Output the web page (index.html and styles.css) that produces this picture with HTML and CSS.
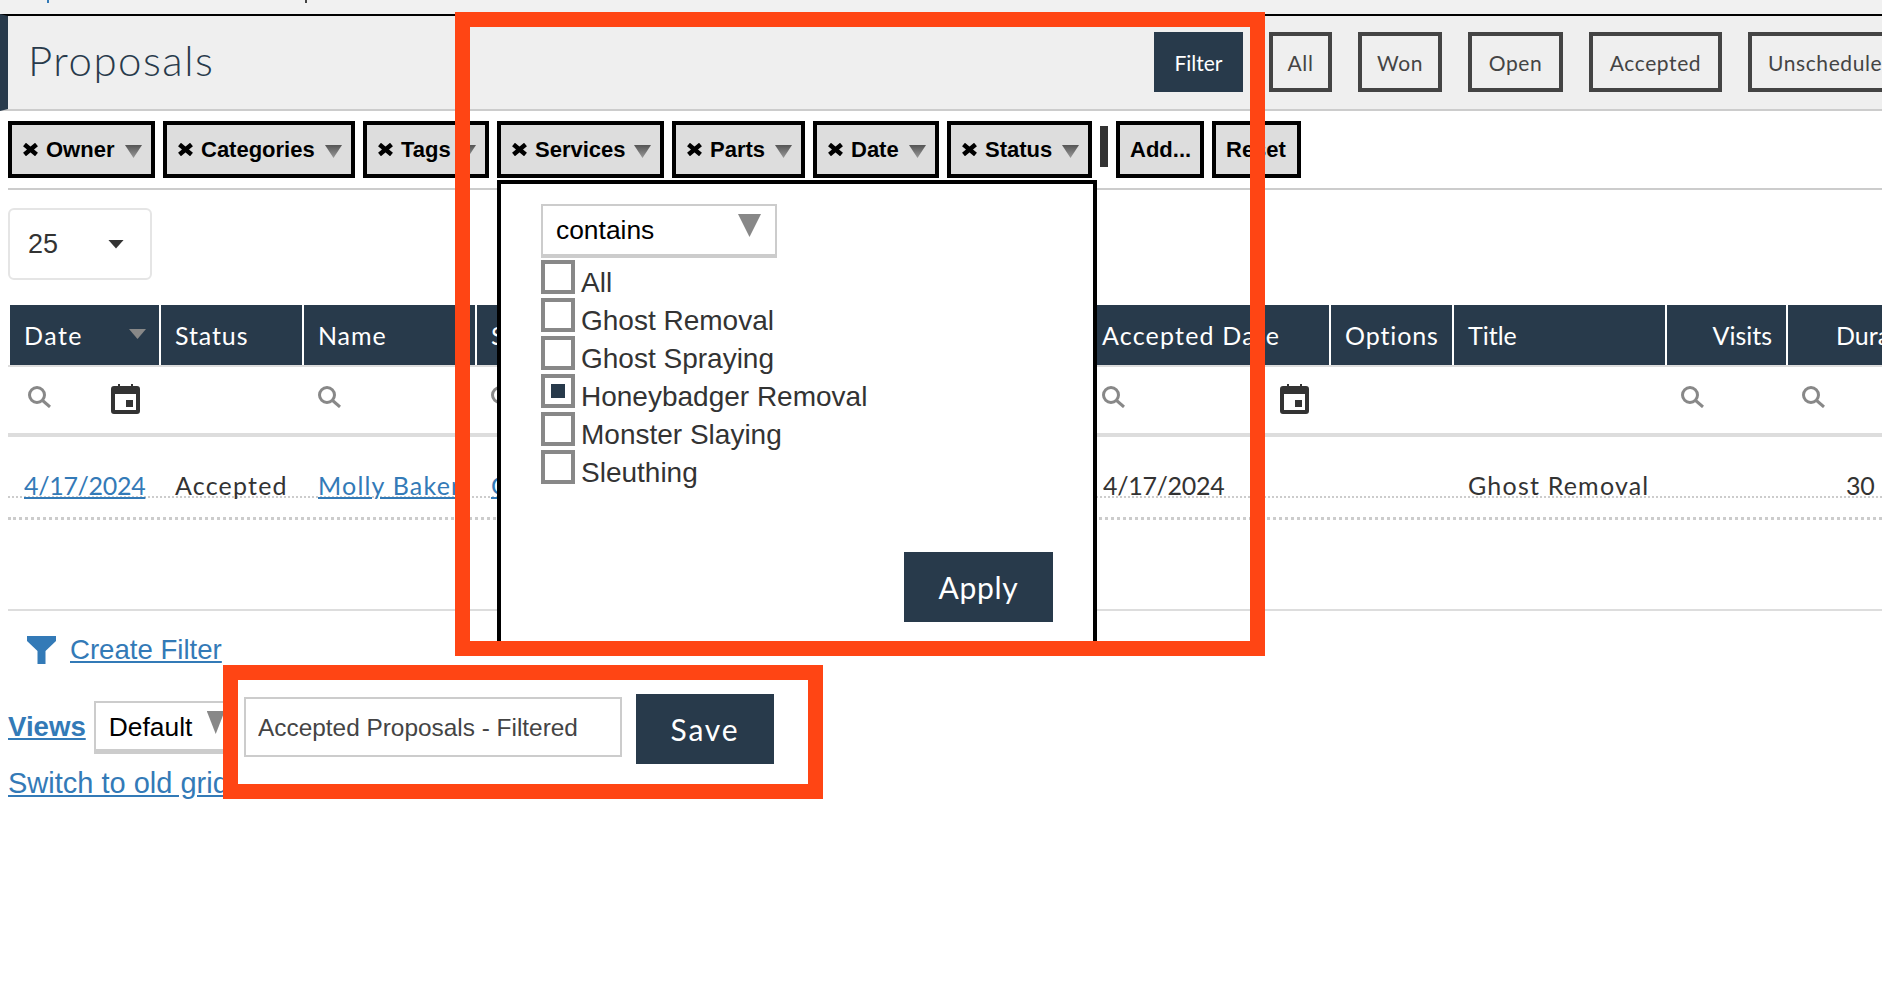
FILE: index.html
```html
<!DOCTYPE html>
<html lang="en">
<head>
<meta charset="utf-8">
<title>Proposals</title>
<link rel="stylesheet" href="styles.css">
</head>
<body>
<div class="page">
  <div class="top-strip"><span class="speck speck-blue"></span><span class="speck speck-dark"></span></div>
  <header class="page-header">
    <h1 class="title">Proposals</h1>
    <button class="btn-filter">Filter</button>
    <nav class="tabs">
      <a class="tab tab-all">All</a>
      <a class="tab tab-won">Won</a>
      <a class="tab tab-open">Open</a>
      <a class="tab tab-accepted">Accepted</a>
      <a class="tab tab-unscheduled">Unscheduled</a>
    </nav>
  </header>

  <div class="chips">
    <div class="chip chip-owner"><svg class="x" viewBox="0 0 15 13"><path d="M1.500 1.500 13.500 11.500M13.500 1.500 1.500 11.500"/></svg>Owner<i class="tri"></i></div>
    <div class="chip chip-categories"><svg class="x" viewBox="0 0 15 13"><path d="M1.500 1.500 13.500 11.500M13.500 1.500 1.500 11.500"/></svg>Categories<i class="tri"></i></div>
    <div class="chip chip-tags"><svg class="x" viewBox="0 0 15 13"><path d="M1.500 1.500 13.500 11.500M13.500 1.500 1.500 11.500"/></svg>Tags<i class="tri"></i></div>
    <div class="chip chip-services"><svg class="x" viewBox="0 0 15 13"><path d="M1.500 1.500 13.500 11.500M13.500 1.500 1.500 11.500"/></svg>Services<i class="tri"></i></div>
    <div class="chip chip-parts"><svg class="x" viewBox="0 0 15 13"><path d="M1.500 1.500 13.500 11.500M13.500 1.500 1.500 11.500"/></svg>Parts<i class="tri"></i></div>
    <div class="chip chip-date"><svg class="x" viewBox="0 0 15 13"><path d="M1.500 1.500 13.500 11.500M13.500 1.500 1.500 11.500"/></svg>Date<i class="tri"></i></div>
    <div class="chip chip-status"><svg class="x" viewBox="0 0 15 13"><path d="M1.500 1.500 13.500 11.500M13.500 1.500 1.500 11.500"/></svg>Status<i class="tri"></i></div>
    <span class="chip-sep"></span>
    <div class="chip chip-add">Add...</div>
    <div class="chip chip-reset">Reset</div>
  </div>

  <div class="page-size"><span>25</span><i class="caret"></i></div>

  <section class="grid">
    <div class="row row-head">
      <div class="cell cell-date-head">Date<i class="sort"></i></div>
      <div class="cell">Status</div>
      <div class="cell">Name</div>
      <div class="cell">Service</div>
      <div class="cell cell-accepted-head">Accepted Date</div>
      <div class="cell">Options</div>
      <div class="cell cell-title">Title</div>
      <div class="cell cell-right">Visits</div>
      <div class="cell cell-right cell-dur">Duration</div>
    </div>
    <div class="row row-filter">
      <div class="cell cell-first-filter">
        <svg class="search" viewBox="0 0 23 22"><circle cx="9" cy="9" r="7.500"/><path d="M14 14 22 21"/></svg>
        <svg class="cal" viewBox="0 0 29 30"><path class="cal-body" d="M3 2H7V0H9V2H20V0H22V2H26Q29 2 29 5V27Q29 30 26 30H3Q0 30 0 27V5Q0 2 3 2Z"/><rect class="cal-face" x="4" y="10" width="21" height="16"/><rect class="cal-body" x="15" y="16" width="7" height="7"/></svg>
      </div>
      <div class="cell"></div>
      <div class="cell"><svg class="search" viewBox="0 0 23 22"><circle cx="9" cy="9" r="7.500"/><path d="M14 14 22 21"/></svg></div>
      <div class="cell"><svg class="search" viewBox="0 0 23 22"><circle cx="9" cy="9" r="7.500"/><path d="M14 14 22 21"/></svg></div>
      <div class="cell cell-accepted-filter">
        <svg class="search" viewBox="0 0 23 22"><circle cx="9" cy="9" r="7.500"/><path d="M14 14 22 21"/></svg>
        <svg class="cal" viewBox="0 0 29 30"><path class="cal-body" d="M3 2H7V0H9V2H20V0H22V2H26Q29 2 29 5V27Q29 30 26 30H3Q0 30 0 27V5Q0 2 3 2Z"/><rect class="cal-face" x="4" y="10" width="21" height="16"/><rect class="cal-body" x="15" y="16" width="7" height="7"/></svg>
      </div>
      <div class="cell"></div>
      <div class="cell"></div>
      <div class="cell"><svg class="search" viewBox="0 0 23 22"><circle cx="9" cy="9" r="7.500"/><path d="M14 14 22 21"/></svg></div>
      <div class="cell"><svg class="search" viewBox="0 0 23 22"><circle cx="9" cy="9" r="7.500"/><path d="M14 14 22 21"/></svg></div>
    </div>
    <div class="row row-data">
      <div class="cell"><a class="link num">4/17/2024</a></div>
      <div class="cell">Accepted</div>
      <div class="cell"><a class="link">Molly Baker</a></div>
      <div class="cell"><a class="link">Ghost Removal</a></div>
      <div class="cell cell-accepted-date"><span class="num">4/17/2024</span></div>
      <div class="cell"></div>
      <div class="cell">Ghost Removal</div>
      <div class="cell"></div>
      <div class="cell cell-thirty"><span class="num">30</span></div>
    </div>
    <div class="row-end"></div>
  </section>

  <footer class="foot">
    <div class="foot-filter">
      <svg class="funnel" viewBox="0 0 29 28"><path d="M0 0H29V5L18.500 15V28H10.500V15L0 5Z"/></svg>
      <a class="foot-link">Create Filter</a>
    </div>
    <div class="foot-views">
      <a class="foot-link foot-bold">Views</a>
      <div class="view-select">Default<i class="flat-tri"></i></div>
    </div>
    <a class="foot-link foot-switch">Switch to old grid</a>
  </footer>

  <div class="popup">
    <div class="pop-select">contains<i class="flat-tri flat-tri-lg"></i></div>
    <ul class="options">
      <li class="option"><span class="box"></span>All</li>
      <li class="option"><span class="box"></span>Ghost Removal</li>
      <li class="option"><span class="box"></span>Ghost Spraying</li>
      <li class="option"><span class="box box-on"></span>Honeybadger Removal</li>
      <li class="option"><span class="box"></span>Monster Slaying</li>
      <li class="option"><span class="box"></span>Sleuthing</li>
    </ul>
    <button class="btn-apply">Apply</button>
  </div>

  <div class="mark mark-filter"></div>
  <div class="mark mark-save">
    <input class="save-input" type="text" value="Accepted Proposals - Filtered">
    <button class="btn-save">Save</button>
  </div>
</div>
</body>
</html>
```

FILE: styles.css
```css
* { box-sizing: border-box; }
html, body { margin: 0; padding: 0; background: #fff; }
.page {
  position: relative;
  width: 1882px;
  height: 1000px;
  overflow: hidden;
  font-family: "Liberation Sans", Arial, sans-serif;
}

/* top */
.top-strip { position: relative; height: 14px; background: #f1f1f1; }
.speck { position: absolute; top: 0; width: 2px; height: 3px; }
.speck-blue { left: 47px; background: #337ab7; }
.speck-dark { left: 305px; background: #444; }

.page-header {
  display: flex;
  height: 97px;
  padding-top: 16px;
  border-top: 2px solid #000;
  border-bottom: 2px solid #ccc;
  border-left: 8px solid #283a4b;
  background: #efefef;
  white-space: nowrap;
}
.title {
  flex: 0 0 1146px;
  height: 44px;
  margin: 6px 0 0;
  padding: 0 0 0 20px;
  color: #283a4b;
  font: 300 42px/44px Lato, sans-serif;
  letter-spacing: 1.500px;
}
.btn-filter {
  flex: 0 0 89px;
  height: 60px;
  border: 0;
  background: #283a4b;
  color: #fff;
  font: 400 21px Lato, sans-serif;
}
.tabs { display: flex; gap: 26px; margin-left: 26px; }
.tab {
  display: flex;
  align-items: center;
  justify-content: center;
  height: 60px;
  border: 4px solid #444;
  color: #444;
  font: 400 21px Lato, sans-serif;
  letter-spacing: 0.600px;
}
.tab-all { width: 63px; }
.tab-won { width: 84px; }
.tab-open { width: 95px; }
.tab-accepted { width: 133px; }
.tab-unscheduled { width: 160px; justify-content: flex-start; padding-left: 16px; }

/* filter chips */
.chips {
  display: flex;
  gap: 8px;
  margin: 10px 0 0 8px;
  padding-bottom: 10px;
  border-bottom: 2px solid #ccc;
}
.chip {
  position: relative;
  display: flex;
  align-items: center;
  height: 57px;
  padding-left: 11px;
  border: 4px solid #000;
  background: #ddd;
  color: #000;
  font-size: 22px;
  font-weight: 700;
  white-space: nowrap;
}
.chip-owner { width: 147px; }
.chip-categories { width: 192px; }
.chip-tags { width: 126px; }
.chip-services { width: 167px; }
.chip-parts { width: 133px; }
.chip-date { width: 126px; }
.chip-status { width: 145px; }
.chip-add { width: 88px; padding-left: 10px; }
.chip-reset { width: 89px; padding-left: 10px; }
.x { width: 15px; height: 13px; margin-right: 8px; }
.x path { fill: none; stroke: #000; stroke-width: 4.500; }
.tri {
  position: absolute;
  right: 9px;
  top: 20px;
  width: 17px;
  height: 13px;
  background: linear-gradient(#555, #999);
  clip-path: polygon(0 0, 100% 0, 50% 100%);
}
.chip-sep { flex: 0 0 8px; height: 41px; margin-top: 5px; background: #333; }

/* page size */
.page-size {
  display: flex;
  align-items: center;
  justify-content: space-between;
  width: 144px;
  height: 72px;
  margin: 18px 0 25px 8px;
  padding: 0 26px 0 18px;
  border: 2px solid #e5e5e5;
  border-radius: 6px;
  color: #333;
  font-size: 27px;
}
.caret {
  width: 16px;
  height: 9px;
  background: #333;
  clip-path: polygon(0 0, 100% 0, 50% 100%);
}

/* grid */
.grid { margin-left: 8px; }
.row {
  display: grid;
  grid-template-columns: 149px 141px 171px 611px 239px 121px 211px 119px 220px;
  column-gap: 2px;
  padding-left: 2px;
  white-space: nowrap;
}
.row-head {
  height: 62px;
  border-bottom: 2px solid #ddd;
}
.row-head .cell {
  position: relative;
  height: 60px;
  padding: 0 14px;
  background: #283a4b;
  color: #fff;
  font: 400 25px/60px Lato, sans-serif;
  letter-spacing: 0.900px;
}
.row-head .cell-date-head { letter-spacing: 1.500px; }
.row-head .cell-accepted-head { padding-left: 12px; letter-spacing: 1.200px; }
.row-head .cell-title { letter-spacing: 0; }
.row-head .cell-right { letter-spacing: 0; text-align: right; }
.row-head .cell-dur { padding-left: 48px; text-align: left; }
.sort {
  position: absolute;
  right: 13px;
  top: 24px;
  width: 17px;
  height: 10px;
  background: #888;
  clip-path: polygon(0 0, 100% 0, 50% 100%);
}
.row-filter {
  height: 70px;
  border-bottom: 4px solid #ddd;
}
.row-filter .cell { position: relative; padding: 19px 0 0 14px; }
.row-filter .cell-first-filter { padding-left: 18px; }
.row-filter .cell-accepted-filter { padding-left: 12px; }
.search { display: block; width: 23px; height: 22px; }
.search circle, .search path { fill: none; stroke: #888; stroke-width: 3; }
.cal { position: absolute; left: 101px; top: 17px; width: 29px; height: 30px; }
.cell-accepted-filter .cal { left: 190px; }
.cal-body { fill: #333; }
.cal-face { fill: #fff; }
.row-data {
  height: 61px;
  border-bottom: 2px dotted #ccc;
}
.row-data .cell {
  padding: 36px 0 0 14px;
  color: #333;
  font: 400 25px/24px Lato, sans-serif;
  letter-spacing: 1.200px;
}
.row-data .cell-accepted-date { padding-left: 13px; }
.row-data .cell-thirty { padding-left: 58px; }
.num { letter-spacing: -0.300px; }
.link { color: #337ab7; text-decoration: underline; }
.row-end { height: 22px; border-bottom: 3px dotted #ccc; }

/* footer */
.foot {
  margin: 89px 0 0 8px;
  border-top: 2px solid #ddd;
  font-size: 27.600px;
}
.foot-link { color: #337ab7; text-decoration: underline; }
.foot-filter {
  display: flex;
  align-items: flex-end;
  gap: 14px;
  height: 30px;
  margin-top: 25px;
  padding-left: 19px;
}
.funnel { width: 29px; height: 28px; margin-bottom: 2px; }
.funnel path { fill: #337ab7; }
.foot-views {
  display: flex;
  align-items: center;
  gap: 8px;
  height: 53px;
  margin-top: 35px;
}
.foot-bold { margin-bottom: 2px; font-weight: 700; }
.view-select {
  position: relative;
  width: 136px;
  height: 53px;
  padding: 9px 0 0 13px;
  border: 2px solid #ccc;
  border-bottom-width: 5px;
  color: #000;
  font-size: 26.400px;
  line-height: 30px;
}
.flat-tri {
  position: absolute;
  right: 3px;
  top: 8px;
  width: 18px;
  height: 23px;
  background: #888;
  clip-path: polygon(0 0, 100% 0, 50% 100%);
}
.foot-switch { display: block; margin-top: 13px; font-size: 29px; line-height: 32px; }

/* popup */
.popup {
  position: absolute;
  left: 497px;
  top: 180px;
  width: 600px;
  height: 470px;
  padding: 20px 40px 0;
  border: 4px solid #000;
  background: #fff;
}
.pop-select {
  position: relative;
  width: 236px;
  height: 54px;
  padding: 8px 0 0 13px;
  border: 2px solid #ccc;
  border-bottom-width: 4px;
  color: #000;
  font-size: 26.400px;
  line-height: 32px;
}
.flat-tri-lg { right: 14px; top: 8px; width: 23px; height: 23px; }
.options { margin: 2px 0 0; padding: 0; list-style: none; }
.option {
  display: flex;
  align-items: flex-end;
  gap: 6px;
  height: 38px;
  color: #333;
  font-size: 28px;
  line-height: 30px;
  white-space: nowrap;
}
.box {
  position: relative;
  flex: 0 0 34px;
  height: 34px;
  margin-bottom: 4px;
  border: 4px solid #888;
  background: #fff;
}
.box-on::after {
  content: "";
  position: absolute;
  left: 6px;
  top: 6px;
  width: 14px;
  height: 14px;
  background: #283a4b;
}
.btn-apply {
  display: block;
  width: 149px;
  height: 70px;
  margin: 64px 0 0 auto;
  border: 0;
  background: #283a4b;
  color: #fff;
  font: 400 30px Lato, sans-serif;
  letter-spacing: 0.700px;
}

/* annotation frames */
.mark {
  position: absolute;
  border: 15px solid #ff4514;
}
.mark-filter { left: 455px; top: 12px; width: 810px; height: 644px; }
.mark-save {
  display: flex;
  align-items: center;
  gap: 14px;
  left: 223px;
  top: 665px;
  width: 600px;
  height: 134px;
  padding: 0 0 6px 6px;
  background: #fff;
}
.save-input {
  width: 378px;
  height: 60px;
  margin-bottom: 4px;
  padding: 2px 12px 0;
  border: 2px solid #ccc;
  color: #444;
  font: 400 24.400px "Liberation Sans", Arial, sans-serif;
}
.btn-save {
  width: 138px;
  height: 70px;
  padding-bottom: 2px;
  border: 0;
  background: #283a4b;
  color: #fff;
  font: 400 30px Lato, sans-serif;
  letter-spacing: 1.800px;
}
```
